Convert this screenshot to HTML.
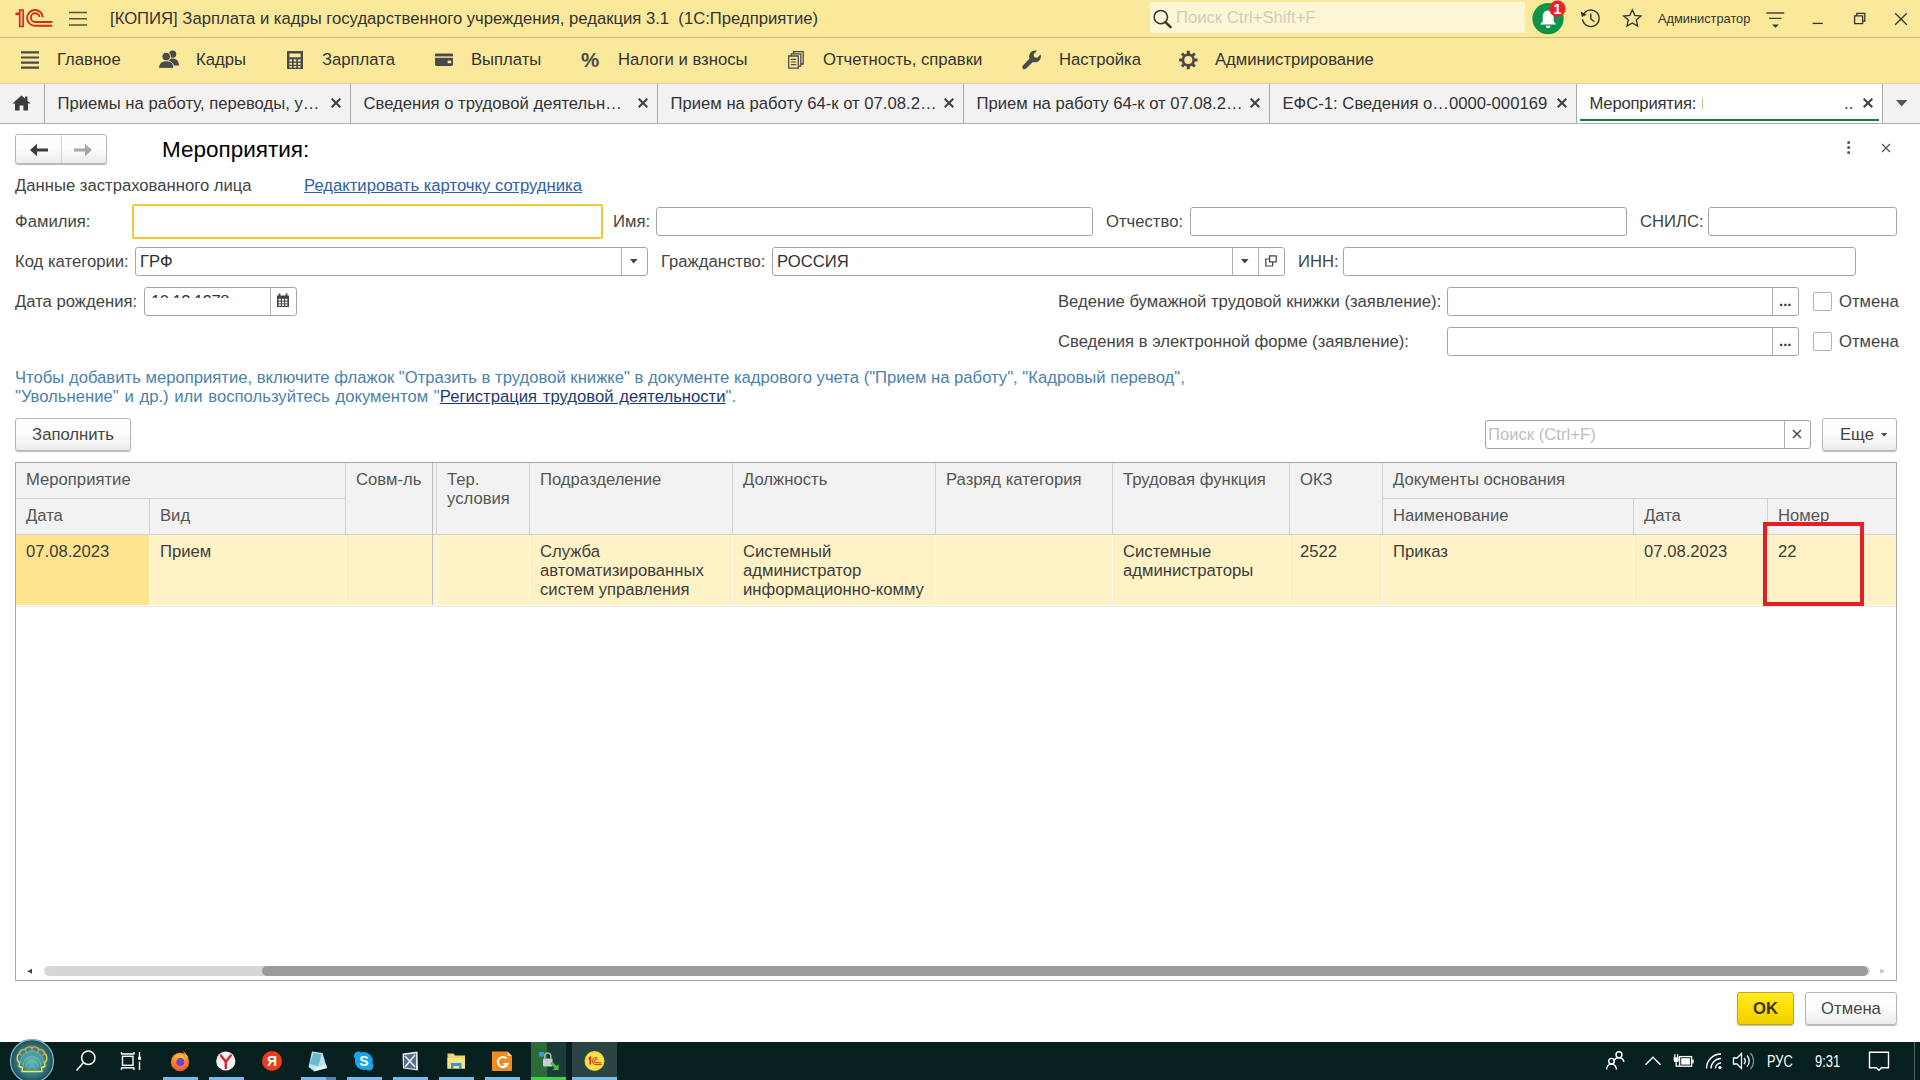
<!DOCTYPE html>
<html lang="ru">
<head>
<meta charset="utf-8">
<title>Мероприятия</title>
<style>
*{box-sizing:border-box;margin:0;padding:0}
html,body{width:1920px;height:1080px;overflow:hidden;background:#fff}
body{font-family:"Liberation Sans",sans-serif;font-size:16.67px;color:#333;position:relative;line-height:19px}
.a{position:absolute;white-space:nowrap}
svg{position:absolute;overflow:visible}
/* header */
#titlebar{left:0;top:0;width:1920px;height:38px;background:#fae99b;border-bottom:1px solid #cfbe74}
#menubar{left:0;top:38px;width:1920px;height:46px;background:#fae99b;border-bottom:1px solid #e4d48e}
#tabbar{left:0;top:84px;width:1920px;height:40px;background:#f2f2f2;border-bottom:1px solid #b0b0b0}
.tab{top:0;height:39px;border-right:1px solid #a8a8a8;padding:10px 0 0 12.500px;color:#333}
.tab .x{position:absolute;right:9px;top:10px;font-size:17px;font-weight:bold;color:#333}
.mi{top:12px;color:#333}
/* form */
.lbl{color:#444;margin-top:1px}
.fld{border:1px solid #a6a6a6;border-radius:3px;background:#fff;height:29px}
.btn{border:1px solid #b8b8b8;border-radius:3px;background:linear-gradient(#fff,#fdfdfd 45%,#ececec);box-shadow:0 1px 1px rgba(0,0,0,.28);color:#444;text-align:center}
.cb{width:19px;height:19px;border:1px solid #b3b3b3;border-radius:2px;background:#fff}
/* table */
#tbl{left:15px;top:462px;width:1882px;height:519px;border:1px solid #a9a9a9;background:#fff}
.th{background:#f2f2f2;color:#555;border-right:1px solid #d2d2d2;border-bottom:1px solid #d2d2d2;padding:7px 0 0 10px;white-space:normal}
.td{background:#fff2c6;color:#3c3c3c;border-right:1px solid #fff9e8;padding:7px 0 0 10px;white-space:normal;overflow:hidden}
/* taskbar */
#taskbar{left:0;top:1042px;width:1920px;height:38px;background:#06201f}
</style>
</head>
<body>
<!--TITLEBAR-->
<div id="titlebar" class="a">
<svg style="left:0;top:0" width="110" height="38" viewBox="0 0 110 38">
 <path d="M19.600 10.100H23.200V26.500H19.600V14.600H16.300V13.300H19.600Z" fill="#f2a98f" stroke="#cf3015" stroke-width="1.500" stroke-linejoin="miter"/>
 <g fill="none" stroke="#cf3015" stroke-width="1.900">
  <path d="M42.900 17.300A7.900 7.900 0 1 0 35.200 25.800H52.300"/>
  <path d="M39.600 17A4.400 4.400 0 1 0 35.400 22H52.300"/>
 </g>
 <g stroke="#5a5238" stroke-width="1.500"><path d="M69 12.600H87M69 18.700H87M69 24.900H87"/></g>
</svg>
<div class="a" style="left:110px;top:9px;color:#333">[КОПИЯ] Зарплата и кадры государственного учреждения, редакция 3.1&nbsp; (1С:Предприятие)</div>
<div class="a" style="left:1150px;top:2px;width:375px;height:31px;background:#fdf6d4;border-radius:3px"></div>
<svg style="left:1150px;top:6px" width="24" height="26" viewBox="0 0 24 26"><circle cx="10.800" cy="11.100" r="6.700" fill="none" stroke="#333" stroke-width="1.500"/><path d="M15.400 16.200L20.600 21.200" stroke="#333" stroke-width="2.400" stroke-linecap="round"/></svg>
<div class="a" style="left:1176px;top:8px;color:#cfcdc0">Поиск Ctrl+Shift+F</div>
<svg style="left:1530px;top:0" width="40" height="38" viewBox="0 0 40 38">
 <circle cx="18" cy="18.700" r="15.600" fill="#0e9347"/>
 <path d="M18.200 10.400c-3.600 0-5.400 2.800-5.400 6.200v4.600l-2.600 3.200h16l-2.600-3.200v-4.600c0-3.400-1.800-6.200-5.400-6.200z" fill="#fff"/>
 <path d="M15.800 25.800a2.400 2.200 0 0 0 4.800 0z" fill="#fff"/>
 <circle cx="27.400" cy="8.800" r="8.200" fill="#e8242b"/>
</svg>
<div class="a" style="left:1552.400px;top:0px;width:10px;text-align:center;font-size:14px;font-weight:bold;color:#fff;line-height:18px">1</div>
<svg style="left:1576px;top:4px" width="30" height="30" viewBox="0 0 30 30">
 <path d="M7.300 10.800A8.300 8.300 0 1 1 6.600 15.400" fill="none" stroke="#333" stroke-width="1.400"/>
 <path d="M4.600 7.600l1.200 5.400 5-2.200z" fill="#333"/>
 <path d="M14.800 9.400v5.600l3.600 2.700" fill="none" stroke="#333" stroke-width="1.400"/>
</svg>
<svg style="left:1620px;top:5px" width="26" height="26" viewBox="0 0 26 26"><path d="M12.300 4.800l2.500 5.600 6.100.7-4.600 4 1.300 6-5.300-3.100-5.300 3.100 1.300-6-4.600-4 6.100-.7z" fill="none" stroke="#333" stroke-width="1.350" stroke-linejoin="miter"/></svg>
<div class="a" style="left:1658px;top:10px;font-size:12.8px;line-height:17px;color:#333">Администратор</div>
<svg style="left:1764px;top:8px" width="24" height="22" viewBox="0 0 24 22"><path d="M2.400 5H20.200M5 10.400H17.600" stroke="#444" stroke-width="1.300"/><path d="M8 16.500h7l-3.500 3.300z" fill="#333"/></svg>
<svg style="left:1808px;top:8px" width="104" height="22" viewBox="0 0 104 22" fill="none" stroke="#333" stroke-width="1.300">
 <path d="M4.600 15.400H14.800"/>
 <path d="M46.600 7.800h8v7.800h-8zM48.800 7.600v-2.200h8v7.800H54.800"/>
 <path d="M87.200 5.200l11.600 11.600M98.800 5.200L87.200 16.800"/>
</svg>
</div>
<!--MENUBAR-->
<div id="menubar" class="a">
<svg style="left:0;top:0" width="1300" height="45" viewBox="0 38 1300 45">
 <g stroke="#4a4a4a" stroke-width="2.2"><path d="M21 52.4H39M21 57.5H39M21 62.6H39M21 67.7H39"/></g>
 <!-- people -->
 <g fill="#4a4a4a">
  <circle cx="172.6" cy="54.2" r="3.6"/><path d="M166.5 65.5c0-4.6 2.6-7 6.1-7s6.4 2.4 6.4 7z"/>
  <circle cx="166.2" cy="56.6" r="4.3" stroke="#fae99b" stroke-width="1"/><path d="M158.6 68.4c0-5 3-7.6 7.6-7.6s7.6 2.6 7.6 7.6z" stroke="#fae99b" stroke-width="1"/>
 </g>
 <!-- calculator -->
 <g fill="#4a4a4a"><path d="M287 51h16v18h-16zM289.4 53.4v3.8h11.2v-3.8z" fill-rule="evenodd"/></g>
 <g fill="#fae99b"><rect x="289.4" y="59.4" width="2.6" height="2"/><rect x="293.7" y="59.4" width="2.6" height="2"/><rect x="298" y="59.4" width="2.6" height="2"/><rect x="289.4" y="62.8" width="2.6" height="2"/><rect x="293.7" y="62.8" width="2.6" height="2"/><rect x="298" y="62.8" width="2.6" height="2"/><rect x="289.4" y="66" width="2.6" height="1.6"/><rect x="293.7" y="66" width="2.6" height="1.6"/><rect x="298" y="66" width="2.6" height="1.6"/></g>
 <!-- card -->
 <g><rect x="435" y="53.6" width="18" height="12.4" rx="1.4" fill="#4a4a4a"/><rect x="435" y="56.4" width="18" height="1.4" fill="#fae99b"/><rect x="447.6" y="60.6" width="3.6" height="2.6" fill="#fae99b"/></g>
 <!-- reports -->
 <g fill="#fae99b" stroke="#4a4a4a" stroke-width="1.3"><path d="M793.6 51.6h9.6v12.4h-9.6z"/><path d="M791.2 53.8h9.6v12.4h-9.6z"/><path d="M788.7 56h9.6v12.2h-9.6z"/></g>
 <path d="M790.8 59.4h5.4M790.8 62h5.4M790.8 64.6h5.4" stroke="#4a4a4a" stroke-width="1.1"/>
 <!-- wrench -->
 <g fill="#4a4a4a"><path d="M1040.6 54.4l-3.4 3.4-3-.6-.6-3 3.4-3.4c-2.4-.8-5 0-6.400 1.600-1.600 1.800-1.900 4.200-1 6.200l-6.600 6.800c-1 1-1 2.400-.1 3.300.9.9 2.300.9 3.300-.1l6.700-6.700c2 .8 4.500.4 6.100-1.200 1.700-1.700 2.300-4.200 1.600-6.300z"/></g>
 <!-- gear -->
 <g transform="translate(1188.3 60)"><circle r="5.4" fill="none" stroke="#4a4a4a" stroke-width="2.7"/><g stroke="#4a4a4a" stroke-width="3"><path d="M0-9.2V-6M0 9.200V6M-9.200 0H-6M9.200 0H6M-6.500-6.500L-4.300-4.300M6.500 6.500L4.300 4.300M-6.500 6.500L-4.300 4.300M6.500-6.500L4.300-4.300"/></g></g>
</svg>
<div class="a mi" style="left:57px">Главное</div>
<div class="a mi" style="left:196px">Кадры</div>
<div class="a mi" style="left:322px">Зарплата</div>
<div class="a mi" style="left:471px">Выплаты</div>
<div class="a" style="left:581px;top:10.500px;font-weight:bold;font-size:20.500px;line-height:22px;color:#4a4a4a">%</div>
<div class="a mi" style="left:618px">Налоги и взносы</div>
<div class="a mi" style="left:823px">Отчетность, справки</div>
<div class="a mi" style="left:1059px">Настройка</div>
<div class="a mi" style="left:1215px">Администрирование</div>
</div>
<!--TABBAR-->
<div id="tabbar" class="a">
<div class="a tab" style="left:0;width:45px"></div>
<svg style="left:12px;top:10.500px" width="19" height="16" viewBox="0 0 19 16"><path d="M9.500 0.400L0.400 8.600H3V15.600H7.600V10.400H11.400V15.600H16V8.600H18.600L15.400 5.700V1.600H13V3.500z" fill="#3b3b3b"/></svg>
<div class="a tab" style="left:45px;width:306px">Приемы на работу, переводы, у…</div><svg style="left:331px;top:14px" width="10" height="10" viewBox="0 0 10 10"><path d="M0.700 0.800L9.300 9.200M9.300 0.800L0.700 9.200" stroke="#424242" stroke-width="2.100"/></svg>
<div class="a tab" style="left:351px;width:307px">Сведения о трудовой деятельн…</div><svg style="left:638px;top:14px" width="10" height="10" viewBox="0 0 10 10"><path d="M0.700 0.800L9.300 9.200M9.300 0.800L0.700 9.200" stroke="#424242" stroke-width="2.100"/></svg>
<div class="a tab" style="left:658px;width:306px">Прием на работу 64-к от 07.08.2…</div><svg style="left:944px;top:14px" width="10" height="10" viewBox="0 0 10 10"><path d="M0.700 0.800L9.300 9.200M9.300 0.800L0.700 9.200" stroke="#424242" stroke-width="2.100"/></svg>
<div class="a tab" style="left:964px;width:306px">Прием на работу 64-к от 07.08.2…</div><svg style="left:1250px;top:14px" width="10" height="10" viewBox="0 0 10 10"><path d="M0.700 0.800L9.300 9.200M9.300 0.800L0.700 9.200" stroke="#424242" stroke-width="2.100"/></svg>
<div class="a tab" style="left:1270px;width:307px">ЕФС-1: Сведения о…0000-000169</div><svg style="left:1557px;top:14px" width="10" height="10" viewBox="0 0 10 10"><path d="M0.700 0.800L9.300 9.200M9.300 0.800L0.700 9.200" stroke="#424242" stroke-width="2.100"/></svg>
<div class="a tab" style="left:1577px;width:306px;background:#fff;letter-spacing:-0.200px">Мероприятия:</div><svg style="left:1863px;top:14px" width="10" height="10" viewBox="0 0 10 10"><path d="M0.700 0.800L9.300 9.200M9.300 0.800L0.700 9.200" stroke="#424242" stroke-width="2.100"/></svg>
<div class="a" style="left:1702px;top:14px;width:1px;height:11px;background:#cdb98a"></div>
<div class="a" style="left:1844px;top:10px;color:#333">..</div>
<div class="a" style="left:1580px;top:35px;width:299px;height:2px;background:#197c44"></div>
<svg style="left:1896px;top:16px" width="12" height="7" viewBox="0 0 12 7"><path d="M0 0H11.400L5.700 6.400z" fill="#555"/></svg>
</div>
<!--FORM-->
<div class="a btn" style="left:15px;top:134px;width:92px;height:30px"></div>
<div class="a" style="left:61px;top:135px;width:1px;height:28px;background:#d4d4d4"></div>
<svg style="left:28px;top:141.500px" width="70" height="16" viewBox="0 0 70 16"><path d="M2 8L9 1.800V6.500H20V9.500H9V14.200z" fill="#3c3c3c"/><path d="M64 8L57 1.800V6.500H46V9.500H57V14.200z" fill="#a9a9a9"/></svg>
<div class="a" style="left:162px;top:137px;font-size:22.5px;line-height:26px;color:#000">Мероприятия:</div>
<svg style="left:1845px;top:140px" width="8" height="16" viewBox="0 0 8 16"><circle cx="3.600" cy="2.500" r="1.500" fill="#555"/><circle cx="3.600" cy="7.500" r="1.500" fill="#555"/><circle cx="3.600" cy="12.500" r="1.500" fill="#555"/></svg>
<svg style="left:1881px;top:143px" width="10" height="10" viewBox="0 0 10 10"><path d="M1 1L9 9M9 1L1 9" stroke="#555" stroke-width="1.300"/></svg>
<div class="a lbl" style="left:15px;top:175px;">Данные застрахованного лица</div>
<div class="a" style="left:304px;top:176px;color:#2d5fa9;text-decoration:underline">Редактировать карточку сотрудника</div>
<div class="a lbl" style="left:15px;top:211px;">Фамилия:</div>
<div class="a" style="left:132px;top:204px;width:471px;height:35px;border:2px solid #f2c833;border-radius:2px;background:#fff"></div>
<div class="a lbl" style="left:613px;top:211px;">Имя:</div>
<div class="a fld" style="left:656px;top:207px;width:437px;"></div>
<div class="a lbl" style="left:1106px;top:211px;">Отчество:</div>
<div class="a fld" style="left:1190px;top:207px;width:437px;"></div>
<div class="a lbl" style="left:1640px;top:211px;">СНИЛС:</div>
<div class="a fld" style="left:1708px;top:207px;width:189px;"></div>
<div class="a lbl" style="left:15px;top:251px;">Код категории:</div>
<div class="a fld" style="left:135px;top:247px;width:513px;"><span style="position:absolute;left:4px;top:4px;color:#333">ГРФ</span><i style="position:absolute;left:485px;top:0;width:1px;height:27px;background:#b0b0b0"></i></div>
<svg style="left:630px;top:259px" width="8" height="5" viewBox="0 0 8 5"><path d="M0 0H7.600L3.800 4.400z" fill="#444"/></svg>
<div class="a lbl" style="left:661px;top:251px;">Гражданство:</div>
<div class="a fld" style="left:772px;top:247px;width:513px;"><span style="position:absolute;left:4px;top:4px;color:#333">РОССИЯ</span><i style="position:absolute;left:459px;top:0;width:1px;height:27px;background:#b0b0b0"></i><i style="position:absolute;left:485px;top:0;width:1px;height:27px;background:#b0b0b0"></i></div>
<svg style="left:1241px;top:259px" width="8" height="5" viewBox="0 0 8 5"><path d="M0 0H7.600L3.800 4.400z" fill="#444"/></svg>
<svg style="left:1265px;top:255px" width="12" height="12" viewBox="0 0 12 12" fill="none" stroke="#444" stroke-width="1.200"><path d="M4.600 0.800H11.200V6.800H4.600zM4.600 4H0.800V11H7.600V6.800"/></svg>
<div class="a lbl" style="left:1298px;top:251px;">ИНН:</div>
<div class="a fld" style="left:1343px;top:247px;width:513px;"></div>
<div class="a lbl" style="left:15px;top:291px;">Дата рождения:</div>
<div class="a fld" style="left:144px;top:287px;width:153px;"><i style="position:absolute;left:125px;top:0;width:1px;height:27px;background:#b0b0b0"></i></div>
<div class="a" style="left:151px;top:292px;width:84px;height:5.500px;overflow:hidden"><span style="position:absolute;left:0;top:0;color:#333;letter-spacing:-0.550px">10.12.1978</span></div>
<svg style="left:276px;top:293px" width="14" height="15" viewBox="0 0 14 15"><path d="M1 2.500H13V14H1z" fill="#444"/><path d="M3.500 0.500V3.500M10.500 0.500V3.500" stroke="#444" stroke-width="1.800"/><g fill="#fff"><rect x="2.600" y="5.800" width="2.200" height="1.800"/><rect x="5.900" y="5.800" width="2.200" height="1.800"/><rect x="9.200" y="5.800" width="2.200" height="1.800"/><rect x="2.600" y="8.600" width="2.200" height="1.800"/><rect x="5.900" y="8.600" width="2.200" height="1.800"/><rect x="9.200" y="8.600" width="2.200" height="1.800"/><rect x="2.600" y="11.300" width="2.200" height="1.600"/><rect x="5.900" y="11.300" width="2.200" height="1.600"/><rect x="9.200" y="11.300" width="2.200" height="1.600"/></g></svg>
<div class="a lbl" style="left:1058px;top:291px;">Ведение бумажной трудовой книжки (заявление):</div>
<div class="a fld" style="left:1447px;top:287px;width:352px;"><i style="position:absolute;left:324px;top:0;width:1px;height:27px;background:#b0b0b0"></i><span style="position:absolute;left:331px;top:3px;font-weight:bold;color:#333;font-size:15px">...</span></div>
<div class="a cb" style="left:1813px;top:292px"></div>
<div class="a lbl" style="left:1839px;top:291px;">Отмена</div>
<div class="a lbl" style="left:1058px;top:331px;">Сведения в электронной форме (заявление):</div>
<div class="a fld" style="left:1447px;top:327px;width:352px;"><i style="position:absolute;left:324px;top:0;width:1px;height:27px;background:#b0b0b0"></i><span style="position:absolute;left:331px;top:3px;font-weight:bold;color:#333;font-size:15px">...</span></div>
<div class="a cb" style="left:1813px;top:332px"></div>
<div class="a lbl" style="left:1839px;top:331px;">Отмена</div>
<div class="a" style="left:15px;top:368px;color:#4a82ad">Чтобы добавить мероприятие, включите флажок "Отразить в трудовой книжке" в документе кадрового учета ("Прием на работу", "Кадровый перевод",<br><span style="word-spacing:1.100px">"Увольнение" и др.) или воспользуйтесь документом "<span style="color:#1d3a6e;text-decoration:underline">Регистрация трудовой деятельности</span>".</span></div>
<div class="a btn" style="left:15px;top:418px;width:116px;height:33px;padding-top:6px">Заполнить</div>
<div class="a fld" style="left:1485px;top:420px;width:326px;"><span style="position:absolute;left:2px;top:4px;color:#bdbdbd">Поиск (Ctrl+F)</span><i style="position:absolute;left:298px;top:0;width:1px;height:27px;background:#b0b0b0"></i></div>
<svg style="left:1792px;top:429px" width="10" height="10" viewBox="0 0 10 10"><path d="M1 1L9 9M9 1L1 9" stroke="#444" stroke-width="1.400"/></svg>
<div class="a btn" style="left:1822px;top:418px;width:75px;height:33px;padding:6px 0 0 17px;text-align:left">Еще</div>
<svg style="left:1881px;top:433px" width="7" height="4" viewBox="0 0 7 4"><path d="M0 0H6.400L3.200 3.600z" fill="#444"/></svg>
<!--TABLE-->
<div id="tbl" class="a">
<div class="a th" style="left:0px;top:0px;width:330px;height:36px;">Мероприятие</div>
<div class="a th" style="left:0px;top:36px;width:134px;height:36px;">Дата</div>
<div class="a th" style="left:134px;top:36px;width:196px;height:36px;">Вид</div>
<div class="a th" style="left:330px;top:0px;width:87px;height:72px;border-right-color:#bdbdbd">Совм-ль</div>
<div class="a th" style="left:417px;top:0px;width:4px;height:72px;padding:0"></div>
<div class="a th" style="left:421px;top:0px;width:93px;height:72px;">Тер. условия</div>
<div class="a th" style="left:514px;top:0px;width:203px;height:72px;">Подразделение</div>
<div class="a th" style="left:717px;top:0px;width:203px;height:72px;">Должность</div>
<div class="a th" style="left:920px;top:0px;width:177px;height:72px;">Разряд категория</div>
<div class="a th" style="left:1097px;top:0px;width:177px;height:72px;">Трудовая функция</div>
<div class="a th" style="left:1274px;top:0px;width:93px;height:72px;">ОКЗ</div>
<div class="a th" style="left:1367px;top:0px;width:513px;height:36px;border-right:0">Документы основания</div>
<div class="a th" style="left:1367px;top:36px;width:251px;height:36px;">Наименование</div>
<div class="a th" style="left:1618px;top:36px;width:134px;height:36px;">Дата</div>
<div class="a th" style="left:1752px;top:36px;width:128px;height:36px;border-right:0">Номер</div>
<div class="a td" style="left:0px;top:72px;width:134px;height:70px;background:#ffe490">07.08.2023</div>
<div class="a td" style="left:134px;top:72px;width:196px;height:70px;">Прием</div>
<div class="a td" style="left:330px;top:72px;width:87px;height:70px;border-right-color:#c4c4c4"></div>
<div class="a td" style="left:417px;top:72px;width:4px;height:70px;padding:0"></div>
<div class="a td" style="left:421px;top:72px;width:93px;height:70px;"></div>
<div class="a td" style="left:514px;top:72px;width:203px;height:70px;">Служба автоматизированных систем управления</div>
<div class="a td" style="left:717px;top:72px;width:203px;height:70px;">Системный администратор информационно-комму</div>
<div class="a td" style="left:920px;top:72px;width:177px;height:70px;"></div>
<div class="a td" style="left:1097px;top:72px;width:177px;height:70px;">Системные администраторы</div>
<div class="a td" style="left:1274px;top:72px;width:93px;height:70px;">2522</div>
<div class="a td" style="left:1367px;top:72px;width:251px;height:70px;">Приказ</div>
<div class="a td" style="left:1618px;top:72px;width:134px;height:70px;">07.08.2023</div>
<div class="a td" style="left:1752px;top:72px;width:128px;height:70px;border-right:0">22</div>
<div class="a" style="left:0;top:142px;width:1880px;height:1px;background:#fffaea"></div><div class="a" style="left:0;top:143px;width:1880px;height:1px;background:#e9e9e9"></div>
<svg style="left:10px;top:502px" width="1865" height="14" viewBox="0 0 1865 14"><path d="M1.200 6.300L6 3.800V8.800z" fill="#444"/><rect x="18" y="1" width="1826" height="10" rx="5" fill="#d6d6d6"/><rect x="236" y="1" width="1606" height="10" rx="5" fill="#9b9b9b"/><path d="M1859 6.300L1854.200 3.800V8.800z" fill="#c4c4c4"/></svg>
</div>
<div class="a" style="left:1763px;top:522px;width:101px;height:84px;border:4px solid #e21f26"></div>
<!--FOOTER-->
<div class="a btn" style="left:1737px;top:992px;width:57px;height:33px;padding-top:6px;background:linear-gradient(#ffea2e,#ffe000 45%,#f0d000);border-color:#c4a700;font-weight:bold;color:#3e3400">OK</div>
<div class="a btn" style="left:1805px;top:992px;width:92px;height:33px;padding-top:6px">Отмена</div>
<!--TASKBAR-->
<div id="taskbar" class="a">
<svg style="left:0;top:-6px" width="1920" height="44" viewBox="0 1036 1920 44">
<defs><radialGradient id="sg" cx="0.5" cy="0.5" r="0.55"><stop offset="0" stop-color="#6fb8b4"/><stop offset="0.45" stop-color="#3f8f96"/><stop offset="0.85" stop-color="#1f5764"/><stop offset="1" stop-color="#1a4552"/></radialGradient><linearGradient id="shl" x1="0" y1="0" x2="0" y2="1"><stop offset="0" stop-color="#f0a038"/><stop offset="0.5" stop-color="#f3cf3c"/><stop offset="1" stop-color="#f5e750"/></linearGradient>
<radialGradient id="ff" cx="0.5" cy="0.3" r="0.8"><stop offset="0" stop-color="#ffd43a"/><stop offset="0.5" stop-color="#ff8a1c"/><stop offset="1" stop-color="#e8334f"/></radialGradient>
<clipPath id="tbc"><rect x="0" y="1037" width="1920" height="43"/></clipPath></defs>
<!-- highlights -->
<rect x="531" y="1042" width="16" height="38" fill="#2c6a37"/><rect x="547" y="1042" width="19" height="38" fill="#1d3b3a"/>
<rect x="572" y="1042" width="45" height="38" fill="#2b4545"/>
<!-- indicators -->
<g fill="#76b9ed"><rect x="163" y="1077" width="35" height="3"/><rect x="209" y="1077" width="35" height="3"/><rect x="301" y="1077" width="35" height="3"/><rect x="347" y="1077" width="35" height="3"/><rect x="393" y="1077" width="35" height="3"/><rect x="439" y="1077" width="35" height="3"/><rect x="485" y="1077" width="35" height="3"/><rect x="572" y="1077" width="45" height="3"/></g>
<rect x="326" y="1077" width="10" height="3" fill="#4f84ad"/>
<rect x="531" y="1077" width="35" height="3" fill="#3fd242"/>
<!-- start -->
<g clip-path="url(#tbc)"><circle cx="32" cy="1061" r="21.500" fill="url(#sg)" stroke="#7fb4bb" stroke-width="1.300"/>
<path d="M26 1067a6 6 0 0 1 12 0M23 1065.500a9 9 0 0 1 18 0M20.500 1063a11.500 11.500 0 0 1 23 0M29 1069a3 3 0 0 1 6 0" fill="none" stroke="#6dbcbf" stroke-width="1.200" opacity=".8"/>
<path d="M22 1071.500H42L41.500 1067.500L45 1066.500L44.500 1063C48 1060 47.500 1055 44.500 1053.500C44 1050.500 41 1049 39 1049.500C37.500 1047 34 1046.500 32 1047.500C30 1046.500 26.500 1047 25 1049.500C23 1049 20 1050.500 19.500 1053.500C16.500 1055 16 1060 19.500 1063L19 1066.500L22.500 1067.500Z" fill="none" stroke="url(#shl)" stroke-width="1.400" stroke-linejoin="round"/>
<path d="M25 1049.500l1.500 3M39 1049.500l-1.500 3M19.500 1053.500l2.500 2M44.500 1053.500l-2.500 2M32 1047.500v3" stroke="#f2a83a" stroke-width="1"/></g>
<!-- search -->
<circle cx="88.300" cy="1057.700" r="6.700" fill="none" stroke="#fff" stroke-width="1.500"/><path d="M83.600 1062.600L76.500 1070.500" stroke="#fff" stroke-width="1.500"/>
<!-- task view -->
<g fill="none" stroke="#fff" stroke-width="1.400"><rect x="122.500" y="1056.300" width="10.500" height="9"/><path d="M121.500 1052v2.600M134 1052v2.600M121.500 1054h12.500M121.500 1070v-2.600M134 1070v-2.600M121.500 1067.800h12.500M139.500 1052v5M139.500 1061.500v8.500"/></g><rect x="138.200" y="1056.800" width="2.800" height="3" fill="#fff"/>
<!-- firefox -->
<circle cx="180" cy="1062" r="9.200" fill="url(#ff)"/><path d="M183 1051c2.500 2 4.500 4.500 5.500 7.500l-2.500-1.500c-1-2.500-2-4-3-6z" fill="#ffbd2e"/><circle cx="180.300" cy="1062" r="4.200" fill="#7a3fd1"/><path d="M173 1058c2-1 4.500-.5 6 1-2 0-3 1.500-2.500 3-2-.5-3.500-2-3.500-4z" fill="#ff9a20"/>
<!-- yandex browser -->
<circle cx="225.800" cy="1061" r="9.600" fill="#f4f4f4"/><path d="M220.800 1055.500L225.800 1061.800L230.800 1055.500M225.800 1061.500V1068" fill="none" stroke="#e0222b" stroke-width="2.400" stroke-linecap="round"/>
<!-- yandex -->
<circle cx="272" cy="1061" r="10" fill="#ee3b1c"/>
<!-- notepad -->
<path d="M312 1051.500l10.500 1.500 4.500 15-12.500 3.500-6-4.500z" fill="#b9e4ee"/><path d="M313.500 1053l8 1.200-3.200 12-8.500-2.500z" fill="#6fb7cc"/><path d="M314.500 1071l12.500-3-1-3.500-11.500 3.500z" fill="#e8eef0"/>
<!-- skype -->
<circle cx="363.800" cy="1061" r="9" fill="#1da3e8"/><circle cx="358.500" cy="1056" r="4.500" fill="#1da3e8"/><circle cx="369" cy="1066" r="4.500" fill="#1da3e8"/>
<!-- X app -->
<path d="M402.500 1053.500l15-2 .5 19-15-2z" fill="#dfe6ee"/><path d="M404 1055l12-1.500v15.500l-12-1.500z" fill="#5b6b8c"/><path d="M405 1056l10 11M415 1055l-10 12" stroke="#e9edf2" stroke-width="1.600"/>
<!-- folder -->
<path d="M447.500 1053.500h6l1.500 2h10v13h-17.500z" fill="#f7d268"/><path d="M447.500 1058h17.500v10.500h-17.500z" fill="#fbe08a"/><path d="M451 1063h10.500v6h-2.500v-3h-5.500v3H451z" fill="#2f9bdb"/>
<!-- foxit -->
<path d="M492 1051.500h15.500l4.500 4.500v15H492z" fill="#f18a21"/><path d="M507.500 1051.500v4.500h4.500z" fill="#fbd1a0"/><path d="M506.500 1058.500a5 5 0 1 0 1 5.500h-4" fill="none" stroke="#fff" stroke-width="2"/>
<!-- remote/lock -->
<rect x="543" y="1058.500" width="9.500" height="8" rx="1" fill="#c9ccd0"/><path d="M544.800 1058.500v-2.500a3 3 0 0 1 6 0v2.500" fill="none" stroke="#aeb3b9" stroke-width="1.500"/><rect x="539" y="1052" width="5" height="4.500" fill="#2e9be0"/><path d="M550 1063.500l4.500 4.500-2 2h6v-6l-2 2-4.500-4.500z" fill="#49c23b"/>
<!-- 1C -->
<circle cx="594.500" cy="1061" r="10" fill="#f7d530"/><circle cx="594.500" cy="1061" r="8.600" fill="#fbe04a"/>
<path d="M588.500 1059l1.800-1.600v7.200" fill="none" stroke="#d8261c" stroke-width="1.500"/><path d="M597.500 1058.300a3.400 3.400 0 1 0-1.700 6.300h5.700M596.800 1059.900a1.600 1.600 0 1 0-1 2.900h5.700" fill="none" stroke="#d8261c" stroke-width="1"/>
<!-- tray: people -->
<g fill="none" stroke="#fff" stroke-width="1.400"><circle cx="1619" cy="1054.800" r="3"/><path d="M1613.600 1061.500c1-2.600 3-3.700 5.400-3.700 2.600 0 4.400 1.500 5 4"/><circle cx="1611.500" cy="1061.200" r="2.800"/><path d="M1606.500 1069.500c.3-3.600 2.200-5.400 5-5.400s4.600 1.800 5 5.400"/></g>
<!-- chevron -->
<path d="M1645.500 1064.800L1653 1057.300L1660.500 1064.800" fill="none" stroke="#fff" stroke-width="1.400"/>
<!-- battery -->
<g fill="none" stroke="#fff" stroke-width="1.300"><rect x="1679.600" y="1056.600" width="12" height="9.600"/><path d="M1674.800 1054.200v3M1677.600 1054.200v3M1676.200 1062.500v3.600h3"/></g><path d="M1673.600 1057.200h5.200v2.600a2.600 2.600 0 0 1-5.200 0z" fill="#fff"/><rect x="1681.200" y="1058.200" width="8.800" height="6.400" fill="#fff"/><rect x="1692.200" y="1059.400" width="1.500" height="4" fill="#fff"/>
<!-- wifi -->
<g fill="none" stroke="#fff" stroke-width="1.400"><path d="M1706.500 1068.500a14.500 14.500 0 0 1 14.500-14.500M1711 1068.500a10 10 0 0 1 10-10M1715.500 1068.500a5.500 5.500 0 0 1 5.500-5.500"/></g><circle cx="1720" cy="1067.600" r="1.600" fill="#fff"/>
<!-- speaker -->
<g fill="none" stroke="#fff" stroke-width="1.300"><path d="M1733.500 1058h3.500l4.500-4.500v15l-4.500-4.500h-3.500z"/><path d="M1744 1058a4.500 4.500 0 0 1 0 6M1747 1055.500a8 8 0 0 1 0 11"/><path d="M1750.500 1053a12 12 0 0 1 0 16" stroke="#7f8f8f"/></g>
<!-- notification -->
<path d="M1869.500 1052.200h19v15.600h-7l-2.500 2.500-2.500-2.500h-7z" fill="none" stroke="#fff" stroke-width="1.400"/>
<rect x="1914" y="1042" width="1" height="38" fill="#4e6060"/>
</svg>
<div class="a" style="left:266px;top:10px;width:12px;text-align:center;color:#fff;font-weight:bold;font-size:14px;line-height:18px">Я</div>
<div class="a" style="left:358.500px;top:9px;width:11px;text-align:center;color:#fff;font-weight:bold;font-size:14px;line-height:20px">S</div>
<div class="a" style="left:1767px;top:10.500px;color:#fff;font-size:16px;line-height:18px;transform:scaleX(0.8);transform-origin:0 0">РУС</div>
<div class="a" style="left:1815px;top:10.500px;color:#fff;font-size:16px;line-height:18px;transform:scaleX(0.81);transform-origin:0 0">9:31</div>
</div>
</body>
</html>
